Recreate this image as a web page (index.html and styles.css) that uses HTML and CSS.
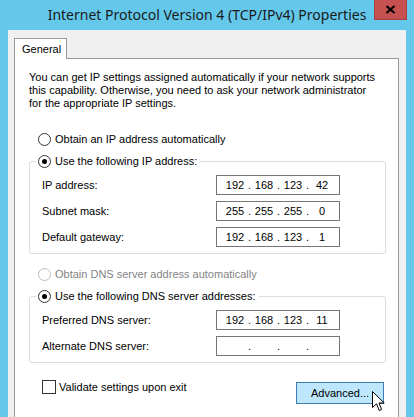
FILE: index.html
```html
<!DOCTYPE html>
<html>
  <head>
    <title>Internet Protocol Version 4 (TCP/IPv4) Properties</title>
    <link rel="stylesheet" href="styles.css">
  </head>
  <body>
    <div class="window">
      <div class="titlebar">
        <span class="title">Internet Protocol Version 4 (TCP/IPv4) Properties</span>
        <div class="close">
          <svg width="11" height="9" viewBox="0 0 11 9">
            <path d="M1.5 1 L9.5 8 M9.5 1 L1.5 8" stroke="#000" stroke-width="2.2" />
          </svg>
        </div>
      </div>

      <div class="client">
        <div class="tabs">
          <div class="tab">General</div>
        </div>

        <div class="panel">
          <p class="intro">You can get IP settings assigned automatically if your network supports<br>this capability. Otherwise, you need to ask your network administrator<br>for the appropriate IP settings.</p>

          <div class="radio first">
            <span class="circle"></span>Obtain an IP address automatically
          </div>

          <fieldset class="group">
            <legend>
              <span class="radio"><span class="circle checked"></span>Use the following IP address:</span>
            </legend>
            <div class="row">
              <span>IP address:</span>
              <div class="ip"><span>192</span><i>.</i><span>168</span><i>.</i><span>123</span><i>.</i><span>42</span></div>
            </div>
            <div class="row">
              <span>Subnet mask:</span>
              <div class="ip"><span>255</span><i>.</i><span>255</span><i>.</i><span>255</span><i>.</i><span>0</span></div>
            </div>
            <div class="row">
              <span>Default gateway:</span>
              <div class="ip"><span>192</span><i>.</i><span>168</span><i>.</i><span>123</span><i>.</i><span>1</span></div>
            </div>
          </fieldset>

          <div class="radio disabled second">
            <span class="circle"></span>Obtain DNS server address automatically
          </div>

          <fieldset class="group">
            <legend>
              <span class="radio"><span class="circle checked"></span>Use the following DNS server addresses:</span>
            </legend>
            <div class="row">
              <span>Preferred DNS server:</span>
              <div class="ip"><span>192</span><i>.</i><span>168</span><i>.</i><span>123</span><i>.</i><span>11</span></div>
            </div>
            <div class="row">
              <span>Alternate DNS server:</span>
              <div class="ip"><span></span><i>.</i><span></span><i>.</i><span></span><i>.</i><span></span></div>
            </div>
          </fieldset>

          <div class="footer">
            <div class="check"><span class="box"></span>Validate settings upon exit</div>
            <div class="button">Advanced...</div>
          </div>
        </div>
      </div>

      <svg class="cursor" width="13" height="22" viewBox="0 0 13 22">
        <path d="M0.5 0.5 L0.5 16.5 L4.5 12.8 L7.2 19.5 L9.6 18.5 L7 12 L12.2 12 Z" fill="#fff" stroke="#000" stroke-width="1" stroke-linejoin="miter" />
      </svg>
    </div>
  </body>
</html>
```

FILE: styles.css
```css
body {
  margin: 0;
  font-family: "Liberation Sans", Arial, sans-serif;
  font-size: 11px;
  color: #000;
}
.window {
  position: relative;
  width: 414px;
  height: 417px;
  overflow: hidden;
  background-color: #64c8eb;
  display: flex;
  flex-direction: column;
}
.titlebar {
  position: relative;
  height: 30px;
  display: flex;
  justify-content: center;
  align-items: center;
}
.title {
  font-family: "Noto Sans", sans-serif;
  font-size: 14px;
  color: #1a1a1a;
  margin-top: -1px;
}
.close {
  position: absolute; /* sits over the title bar */
  top: 0;
  left: 374px;
  width: 33px;
  height: 20px;
  box-sizing: border-box;
  background-color: #c75050;
  border: 1px solid #a84040;
  border-top: none;
  display: flex;
  justify-content: center;
  align-items: center;
}
.client {
  flex: 1;
  margin: 0 8px;
  background-color: #f0f0f0;
  padding: 8px 7px 0 6px;
  display: flex;
  flex-direction: column;
}
.tabs {
  display: flex;
  height: 20px;
}
.tab {
  position: relative;
  z-index: 1;
  width: 53px;
  height: 21px;
  box-sizing: border-box;
  background-color: #fff;
  border: 1px solid #999;
  border-bottom: none;
  padding: 4px 0 0 7px;
  line-height: 13px;
}
.panel {
  flex: 1;
  background-color: #fff;
  border: 1px solid #999;
  border-bottom: none;
  padding: 12px 12px 0 14px;
}
.intro {
  margin: 0;
  line-height: 13px;
}
.radio {
  display: flex;
  align-items: center;
  height: 13px;
  line-height: 13px;
}
.radio.first {
  margin: 23px 0 0 9px;
}
.radio.second {
  margin: 14px 0 0 9px;
}
.radio.disabled {
  color: #838383;
}
.circle {
  width: 13px;
  height: 13px;
  box-sizing: border-box;
  border: 1px solid #333;
  border-radius: 50%;
  background-color: #fff;
  margin-right: 4px;
  display: flex;
  justify-content: center;
  align-items: center;
}
.radio.disabled .circle {
  border-color: #bcbcbc;
}
.circle.checked::after {
  content: "";
  width: 5px;
  height: 5px;
  border-radius: 50%;
  background-color: #000;
}
.group {
  margin: 9px 0 0 0;
  border: 1px solid #dcdcdc;
  border-radius: 3px;
  padding: 7px 0 6px 12px;
  display: flex;
  flex-direction: column;
  gap: 6px;
}
.group legend {
  margin-left: -6px;
  padding: 0 3px 0 2px;
}
.row {
  display: grid;
  grid-template-columns: 174px 124px;
  align-items: center;
  height: 20px;
}
.ip {
  height: 20px;
  box-sizing: border-box;
  border: 1px solid #767676;
  display: flex;
  align-items: center;
  padding-left: 6px;
}
.ip span {
  width: 24px;
  text-align: center;
}
.ip i {
  font-style: normal;
  width: 5px;
  text-align: center;
}
.footer {
  display: flex;
  justify-content: space-between;
  align-items: flex-start;
  margin-top: 17px;
  padding: 0 2px 0 13px;
}
.check {
  display: flex;
  align-items: center;
  height: 14px;
}
.box {
  width: 14px;
  height: 14px;
  box-sizing: border-box;
  border: 1px solid #333;
  margin-right: 3px;
}
.button {
  margin-top: 2px;
  width: 88px;
  height: 22px;
  box-sizing: border-box;
  background-color: #bee6fd;
  border: 1px solid #3c7fb1;
  display: flex;
  justify-content: center;
  align-items: center;
}
.cursor {
  position: absolute; /* mouse pointer over the button */
  left: 372px;
  top: 391px;
}
```
